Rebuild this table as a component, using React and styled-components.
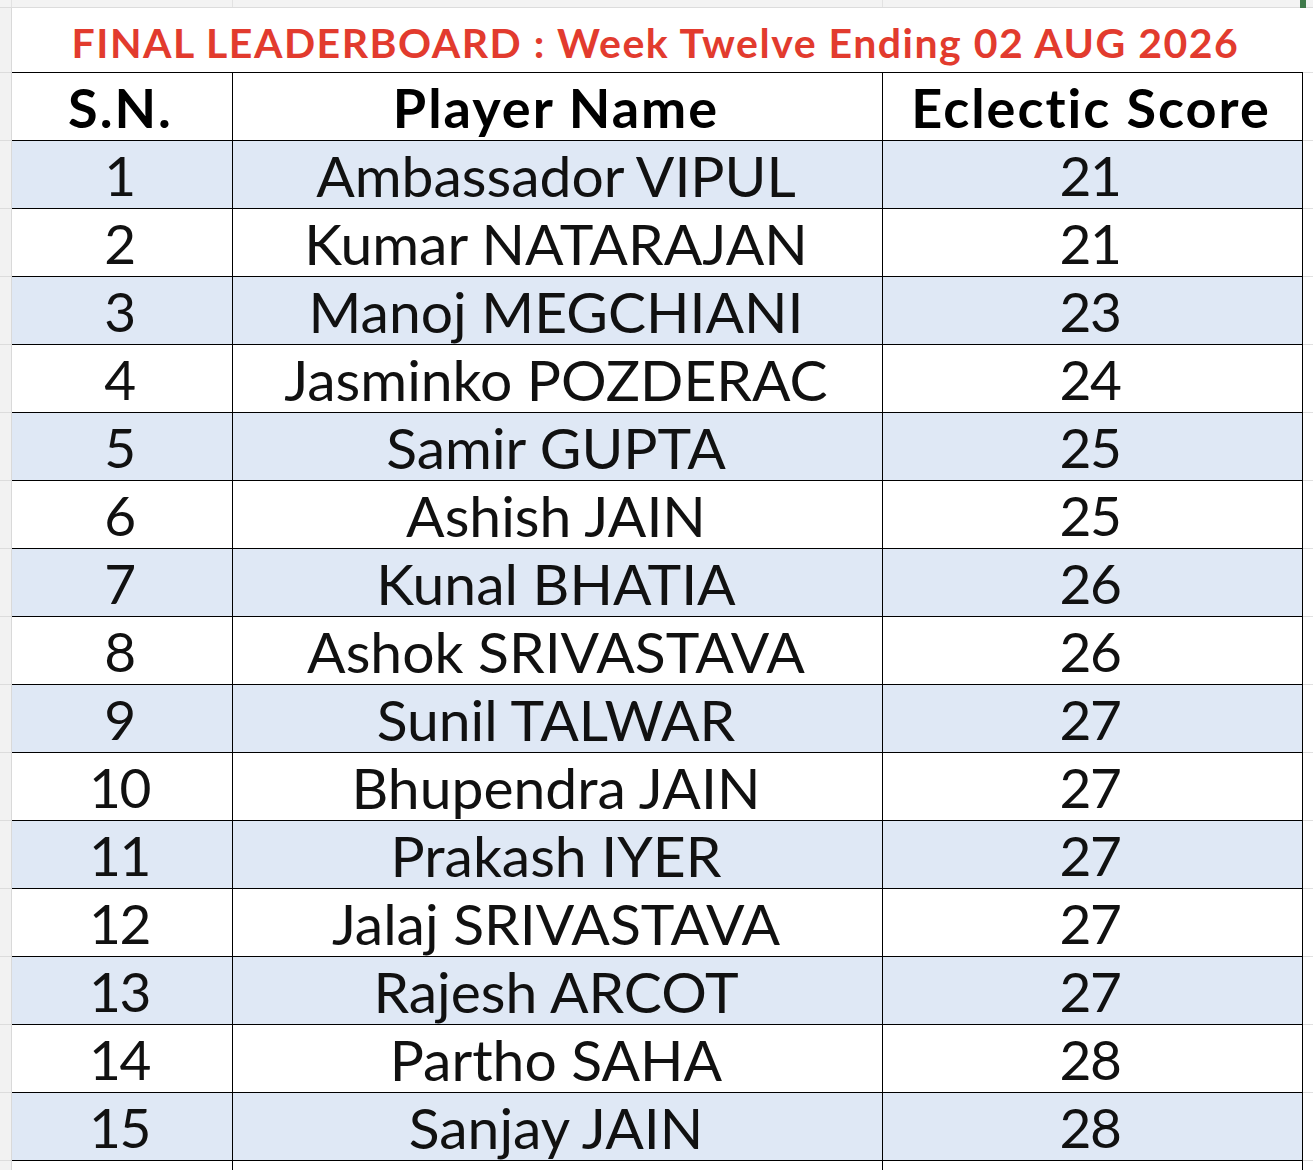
import React from "react";
import styled, { createGlobalStyle } from "styled-components";

const Global = createGlobalStyle`
  html, body { margin: 0; padding: 0; background: #ffffff; }
  body { font-family: Lato, "Noto Sans", sans-serif; overflow: hidden; }
  * { box-sizing: border-box; }
`;

const COLS = "12px 221px 650px 420px 1fr";

const Page = styled.div`
  width: 1313px;
  height: 1170px;
  overflow: hidden;
  position: relative;
`;

const TopStrip = styled.div`
  display: grid;
  grid-template-columns: ${COLS};
  height: 8px;
  background: #f3f3f3;
  border-bottom: 1px solid #dcdcdc;
`;

const TopCell = styled.div`
  border-right: 1px solid ${(p) => (p.$last ? "transparent" : "#e2e2e2")};
`;

const Marker = styled.div`
  position: absolute;
  left: 1300px;
  top: 0;
  width: 6px;
  height: 8px;
  background: #3f7a4a;
`;

const Row = styled.div`
  display: grid;
  grid-template-columns: ${COLS};
  height: ${(p) => p.$h || 68}px;
`;

const Gutter = styled.div`
  background: #f2f2f2;
  border-right: 1px solid #d9d9d9;
  border-bottom: 1px solid #dcdcdc;
`;

const Cell = styled.div`
  display: flex;
  align-items: center;
  justify-content: center;
  background: ${(p) => (p.$shade ? "#dfe8f5" : "#ffffff")};
  border-right: 1px solid #000;
  border-bottom: ${(p) => (p.$open ? "none" : "1px solid #000")};
  color: #111;
  font-size: 57px;
  font-weight: 400;
  line-height: 1;
  white-space: nowrap;
  padding-top: 2px;
  padding-right: 3px;
`;

const NumCell = styled(Cell)`
  font-size: 55px;
  letter-spacing: -1.5px;
  padding-right: 5px;
`;

const HeadCell = styled(Cell)`
  font-weight: 700;
  font-size: 54px;
  letter-spacing: 2px;
  color: #000;
`;

const TitleCell = styled.div`
  grid-column: 2 / span 3;
  display: flex;
  align-items: center;
  justify-content: center;
  border-bottom: 1px solid #000;
  color: #e23b2e;
  font-weight: 700;
  font-size: 41px;
  letter-spacing: 1.5px;
  white-space: nowrap;
  padding-top: 4px;
  padding-right: 4px;
`;

const Margin = styled.div`
  border-bottom: 1px solid #e0e0e0;
`;

const players = [
  ["Ambassador VIPUL", 21],
  ["Kumar NATARAJAN", 21],
  ["Manoj MEGCHIANI", 23],
  ["Jasminko POZDERAC", 24],
  ["Samir GUPTA", 25],
  ["Ashish JAIN", 25],
  ["Kunal BHATIA", 26],
  ["Ashok SRIVASTAVA", 26],
  ["Sunil TALWAR", 27],
  ["Bhupendra JAIN", 27],
  ["Prakash IYER", 27],
  ["Jalaj SRIVASTAVA", 27],
  ["Rajesh ARCOT", 27],
  ["Partho SAHA", 28],
  ["Sanjay JAIN", 28],
];

export default function App() {
  return (
    <Page>
      <Global />
      <TopStrip>
        <TopCell />
        <TopCell />
        <TopCell />
        <TopCell />
        <TopCell $last />
      </TopStrip>
      <Marker />
      <Row $h={65}>
        <Gutter />
        <TitleCell>FINAL LEADERBOARD : Week Twelve Ending 02 AUG 2026</TitleCell>
        <Margin />
      </Row>
      <Row>
        <Gutter />
        <HeadCell>S.N.</HeadCell>
        <HeadCell>Player Name</HeadCell>
        <HeadCell>Eclectic Score</HeadCell>
        <Margin />
      </Row>
      {players.map(([name, score], i) => (
        <Row key={name}>
          <Gutter />
          <NumCell $shade={i % 2 === 0}>{i + 1}</NumCell>
          <Cell $shade={i % 2 === 0}>{name}</Cell>
          <NumCell $shade={i % 2 === 0}>{score}</NumCell>
          <Margin />
        </Row>
      ))}
      <Row>
        <Gutter />
        <Cell $open />
        <Cell $open />
        <Cell $open />
        <Margin />
      </Row>
    </Page>
  );
}
